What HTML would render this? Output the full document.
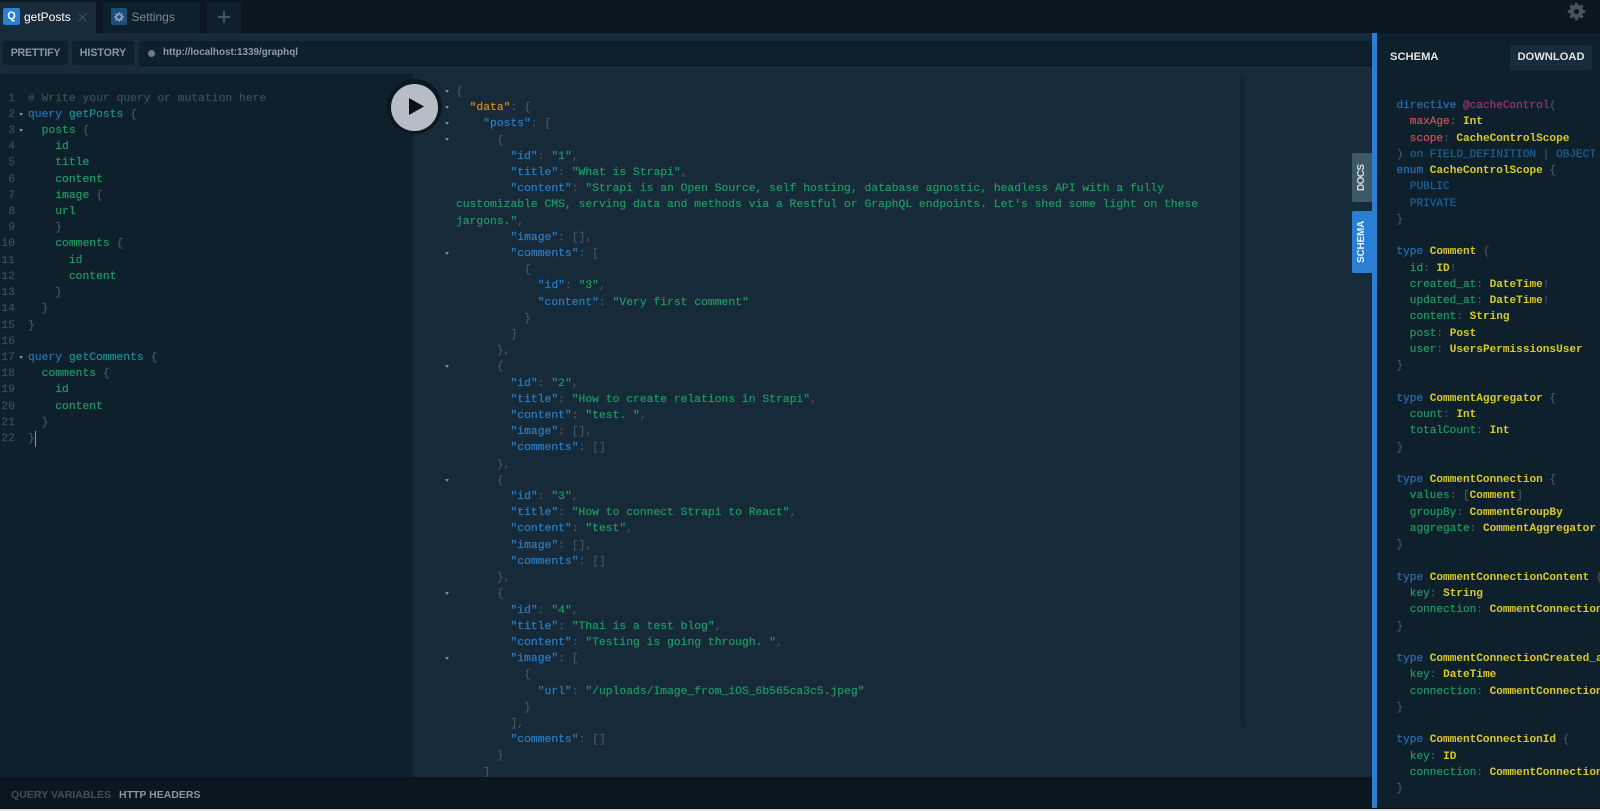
<!DOCTYPE html>
<html><head><meta charset="utf-8"><style>
html,body{margin:0;padding:0;width:1600px;height:811px;overflow:hidden;background:#e4e4e4;font-family:"Liberation Sans",sans-serif}
div,pre{position:absolute;margin:0}
pre{font-family:"Liberation Mono",monospace;font-size:11.35px;line-height:16.2px;color:#5b6a75;white-space:pre;-webkit-text-stroke:.2px currentColor}
.a{position:absolute;width:0;height:0;border-left:2.5px solid transparent;border-right:2.5px solid transparent;border-top:3.5px solid #7d8a93}
.k{color:#2a6fb5}.f{color:#1f9a62}.o{color:#1f8f93}.n{color:#3d4c57}.c{color:#46555f}
.p{color:#2a7ec4}.s{color:#1f9a62}.d{color:#d98a14}
.y{color:#d8c92a;font-weight:bold;-webkit-text-stroke:0}.e{color:#1a6299}.r{color:#c9534f}.m{color:#a2307f}
.b{font-weight:bold;font-size:10.6px;color:#8a97a0;text-align:center;background:#0f202d;border-radius:2px}
</style></head><body>
<div style="left:0;top:0;width:1600px;height:808px;background:#0f202d;overflow:hidden">
<!-- top bar -->
<div style="left:0;top:0;width:1600px;height:33px;background:#0a1721"></div>
<div style="left:0;top:2px;width:96px;height:31px;background:#172b3a"></div>
<div style="left:3px;top:8px;width:17px;height:17px;background:#2a7ed3;border-radius:2px;color:#fff;font-weight:bold;font-size:11px;line-height:17px;text-align:center">Q</div>
<div style="left:24px;top:9px;font-size:12px;color:#fff;line-height:16px">getPosts</div>
<svg style="position:absolute;left:78px;top:13px" width="9" height="9"><path d="M0.5 .5L8.5 8.5M8.5 .5L.5 8.5" stroke="#46545e" stroke-width="1"/></svg>
<div style="left:103px;top:2px;width:97px;height:31px;background:#0f202d"></div>
<div style="left:111px;top:8px;width:16px;height:17px;background:#1b4f7d;border-radius:2px"></div>
<svg style="position:absolute;left:114px;top:12px" width="10" height="10" viewBox="0 0 10 10"><circle cx="5" cy="5" r="2.8" fill="none" stroke="#8fa3b2" stroke-width="2"/><path d="M5 0v2M5 8v2M0 5h2M8 5h2M1.5 1.5l1.4 1.4M7.1 7.1l1.4 1.4M8.5 1.5L7.1 2.9M2.9 7.1L1.5 8.5" stroke="#8fa3b2" stroke-width="1.2"/></svg>
<div style="left:131.5px;top:9px;font-size:12px;color:#7b8891;line-height:16px">Settings</div>
<div style="left:207px;top:2px;width:34px;height:31px;background:#0f202d"></div>
<svg style="position:absolute;left:217px;top:10px" width="14" height="14"><path d="M7 1v12M1 7h12" stroke="#46555f" stroke-width="2"/></svg>
<svg style="position:absolute;left:1567px;top:2px" width="19" height="19" viewBox="0 0 19 19"><circle cx="9.5" cy="9.5" r="4.6" fill="none" stroke="#46525c" stroke-width="4.2"/><path d="M9.5 .8v3.6M9.5 14.6v3.6M.8 9.5h3.6M14.6 9.5h3.6M3.3 3.3l2.6 2.6M13.1 13.1l2.6 2.6M15.7 3.3l-2.6 2.6M5.9 13.1l-2.6 2.6" stroke="#46525c" stroke-width="3"/></svg>
<!-- toolbar -->
<div style="left:0;top:33px;width:1372px;height:41px;background:#172b3a"></div>
<div class="b" style="left:3px;top:41px;width:65px;height:24px;line-height:24px;letter-spacing:-.2px">PRETTIFY</div>
<div class="b" style="left:72px;top:41px;width:62px;height:24px;line-height:24px">HISTORY</div>
<div style="left:139px;top:41px;width:1233px;height:24px;background:#0f202d;border-radius:4px 0 0 4px;border-bottom:1px solid #08131b"></div>
<div style="left:148px;top:50px;width:7px;height:7px;border-radius:50%;background:#6e7b85"></div>
<div style="left:163px;top:45px;font-size:9.9px;font-weight:bold;color:#8f9ba4;line-height:16px">http://localhost:1339/graphql</div>
<!-- result -->
<div style="left:413px;top:74px;width:959px;height:703px;background:#172a3a;overflow:hidden">
<div style="left:827px;top:-6px;width:5px;height:659px;background:#13232f;border-radius:3px"></div>
<pre style="left:43px;top:10px"><span class="c">{</span>
  <span class="d">"data"</span><span class="c">: {</span>
    <span class="p">"posts"</span><span class="c">: [</span>
      <span class="c">{</span>
        <span class="p">"id"</span><span class="c">: </span><span class="s">"1"</span><span class="c">,</span>
        <span class="p">"title"</span><span class="c">: </span><span class="s">"What is Strapi"</span><span class="c">,</span>
        <span class="p">"content"</span><span class="c">: </span><span class="s">"Strapi is an Open Source, self hosting, database agnostic, headless API with a fully</span>
<span class="s">customizable CMS, serving data and methods via a Restful or GraphQL endpoints. Let's shed some light on these</span>
<span class="s">jargons."</span><span class="c">,</span>
        <span class="p">"image"</span><span class="c">: [],</span>
        <span class="p">"comments"</span><span class="c">: [</span>
          <span class="c">{</span>
            <span class="p">"id"</span><span class="c">: </span><span class="s">"3"</span><span class="c">,</span>
            <span class="p">"content"</span><span class="c">: </span><span class="s">"Very first comment"</span>
          <span class="c">}</span>
        <span class="c">]</span>
      <span class="c">},</span>
      <span class="c">{</span>
        <span class="p">"id"</span><span class="c">: </span><span class="s">"2"</span><span class="c">,</span>
        <span class="p">"title"</span><span class="c">: </span><span class="s">"How to create relations in Strapi"</span><span class="c">,</span>
        <span class="p">"content"</span><span class="c">: </span><span class="s">"test. "</span><span class="c">,</span>
        <span class="p">"image"</span><span class="c">: [],</span>
        <span class="p">"comments"</span><span class="c">: []</span>
      <span class="c">},</span>
      <span class="c">{</span>
        <span class="p">"id"</span><span class="c">: </span><span class="s">"3"</span><span class="c">,</span>
        <span class="p">"title"</span><span class="c">: </span><span class="s">"How to connect Strapi to React"</span><span class="c">,</span>
        <span class="p">"content"</span><span class="c">: </span><span class="s">"test"</span><span class="c">,</span>
        <span class="p">"image"</span><span class="c">: [],</span>
        <span class="p">"comments"</span><span class="c">: []</span>
      <span class="c">},</span>
      <span class="c">{</span>
        <span class="p">"id"</span><span class="c">: </span><span class="s">"4"</span><span class="c">,</span>
        <span class="p">"title"</span><span class="c">: </span><span class="s">"Thai is a test blog"</span><span class="c">,</span>
        <span class="p">"content"</span><span class="c">: </span><span class="s">"Testing is going through. "</span><span class="c">,</span>
        <span class="p">"image"</span><span class="c">: [</span>
          <span class="c">{</span>
            <span class="p">"url"</span><span class="c">: </span><span class="s">"/uploads/Image_from_iOS_6b565ca3c5.jpeg"</span>
          <span class="c">}</span>
        <span class="c">],</span>
        <span class="p">"comments"</span><span class="c">: []</span>
      <span class="c">}</span>
    <span class="c">]</span></pre>
<i class="a" style="left:32px;top:16px"></i><i class="a" style="left:32px;top:32px"></i><i class="a" style="left:32px;top:48px"></i><i class="a" style="left:32px;top:64px"></i><i class="a" style="left:32px;top:178px"></i><i class="a" style="left:32px;top:291px"></i><i class="a" style="left:32px;top:405px"></i><i class="a" style="left:32px;top:518px"></i><i class="a" style="left:32px;top:583px"></i>
</div>
<!-- editor -->
<pre style="left:0;top:90.5px;width:15px;text-align:right;color:#3d4c57;line-height:16.22px">1
2
3
4
5
6
7
8
9
10
11
12
13
14
15
16
17
18
19
20
21
22</pre>
<i class="a" style="left:19px;top:113px"></i><i class="a" style="left:19px;top:129px"></i><i class="a" style="left:19px;top:356px"></i>
<pre style="left:28px;top:90.5px;line-height:16.22px"><span class="n"># Write your query or mutation here</span>
<span class="k">query</span> <span class="o">getPosts</span> <span class="c">{</span>
  <span class="f">posts</span> <span class="c">{</span>
    <span class="f">id</span>
    <span class="f">title</span>
    <span class="f">content</span>
    <span class="f">image</span> <span class="c">{</span>
    <span class="f">url</span>
    <span class="c">}</span>
    <span class="f">comments</span> <span class="c">{</span>
      <span class="f">id</span>
      <span class="f">content</span>
    <span class="c">}</span>
  <span class="c">}</span>
<span class="c">}</span>

<span class="k">query</span> <span class="o">getComments</span> <span class="c">{</span>
  <span class="f">comments</span> <span class="c">{</span>
    <span class="f">id</span>
    <span class="f">content</span>
  <span class="c">}</span>
<span class="c">}</span></pre>
<div style="left:35px;top:431px;width:1px;height:16px;background:#8a97a0"></div>
<!-- run button -->
<div style="left:386.5px;top:79px;width:55px;height:55px;border-radius:50%;background:#0b1822"></div>
<div style="left:391px;top:83.5px;width:47px;height:47px;border-radius:50%;background:#b7bdc6"></div>
<svg style="position:absolute;left:409px;top:98px" width="15" height="17"><path d="M0 0L15 8.5L0 17Z" fill="#0a0f14"/></svg>
<!-- bottom -->
<div style="left:0;top:777px;width:1372px;height:31px;background:#0a1721"></div>
<div style="left:11px;top:787px;font-size:10.55px;font-weight:bold;color:#414e58;line-height:16px">QUERY VARIABLES</div>
<div style="left:119px;top:787px;font-size:10.5px;font-weight:bold;color:#8a97a0;line-height:16px">HTTP HEADERS</div>
<!-- side tabs -->
<div style="left:1352px;top:153px;width:20px;height:49px;background:#3d5866;border-radius:2px 0 0 2px"></div>
<div style="left:1352px;top:153px;width:20px;height:49px;color:#d6dde1;font-size:10px;letter-spacing:-.6px;font-weight:bold;writing-mode:vertical-rl;transform:rotate(180deg);text-align:center;line-height:20px">DOCS</div>
<div style="left:1352px;top:211px;width:20px;height:62px;background:#2a7ed3;border-radius:2px 0 0 2px"></div>
<div style="left:1352px;top:211px;width:20px;height:62px;color:#e8f1fa;font-size:10px;letter-spacing:-.2px;font-weight:bold;writing-mode:vertical-rl;transform:rotate(180deg);text-align:center;line-height:20px">SCHEMA</div>
<!-- schema panel -->
<div style="left:1372px;top:33px;width:5px;height:775px;background:#2a7ed3"></div>
<div style="left:1377px;top:33px;width:223px;height:775px;background:#0f202d;overflow:hidden">
<div style="left:13px;top:16px;font-size:11.2px;font-weight:bold;color:#dfe4e7;line-height:16px">SCHEMA</div>
<div style="left:133px;top:12px;width:82px;height:25px;background:#172b3a;border-radius:2px;font-size:11.2px;font-weight:bold;color:#dfe4e7;line-height:25px;text-align:center">DOWNLOAD</div>
<pre style="left:19.5px;top:65px;font-size:11.08px;line-height:16.26px"><span class="k">directive</span> <span class="m">@cacheControl</span><span class="c">(</span>
  <span class="r">maxAge</span><span class="c">:</span> <span class="y">Int</span>
  <span class="r">scope</span><span class="c">:</span> <span class="y">CacheControlScope</span>
<span class="c">)</span> <span class="e">on FIELD_DEFINITION</span> <span class="c">|</span> <span class="e">OBJECT</span> <span class="c">|</span>
<span class="k">enum</span> <span class="y">CacheControlScope</span> <span class="c">{</span>
  <span class="e">PUBLIC</span>
  <span class="e">PRIVATE</span>
<span class="c">}</span>

<span class="k">type</span> <span class="y">Comment</span> <span class="c">{</span>
  <span class="f">id</span><span class="c">:</span> <span class="y">ID</span><span class="c">!</span>
  <span class="f">created_at</span><span class="c">:</span> <span class="y">DateTime</span><span class="c">!</span>
  <span class="f">updated_at</span><span class="c">:</span> <span class="y">DateTime</span><span class="c">!</span>
  <span class="f">content</span><span class="c">:</span> <span class="y">String</span>
  <span class="f">post</span><span class="c">:</span> <span class="y">Post</span>
  <span class="f">user</span><span class="c">:</span> <span class="y">UsersPermissionsUser</span>
<span class="c">}</span>

<span class="k">type</span> <span class="y">CommentAggregator</span> <span class="c">{</span>
  <span class="f">count</span><span class="c">:</span> <span class="y">Int</span>
  <span class="f">totalCount</span><span class="c">:</span> <span class="y">Int</span>
<span class="c">}</span>

<span class="k">type</span> <span class="y">CommentConnection</span> <span class="c">{</span>
  <span class="f">values</span><span class="c">:</span> <span class="c">[</span><span class="y">Comment</span><span class="c">]</span>
  <span class="f">groupBy</span><span class="c">:</span> <span class="y">CommentGroupBy</span>
  <span class="f">aggregate</span><span class="c">:</span> <span class="y">CommentAggregator</span>
<span class="c">}</span>

<span class="k">type</span> <span class="y">CommentConnectionContent</span> <span class="c">{</span>
  <span class="f">key</span><span class="c">:</span> <span class="y">String</span>
  <span class="f">connection</span><span class="c">:</span> <span class="y">CommentConnection</span>
<span class="c">}</span>

<span class="k">type</span> <span class="y">CommentConnectionCreated_at</span> <span class="c">{</span>
  <span class="f">key</span><span class="c">:</span> <span class="y">DateTime</span>
  <span class="f">connection</span><span class="c">:</span> <span class="y">CommentConnection</span>
<span class="c">}</span>

<span class="k">type</span> <span class="y">CommentConnectionId</span> <span class="c">{</span>
  <span class="f">key</span><span class="c">:</span> <span class="y">ID</span>
  <span class="f">connection</span><span class="c">:</span> <span class="y">CommentConnection</span>
<span class="c">}</span></pre>
</div>
</div>
<div style="left:0;top:808px;width:1600px;height:1px;background:#0a0f14"></div>
</body></html>
